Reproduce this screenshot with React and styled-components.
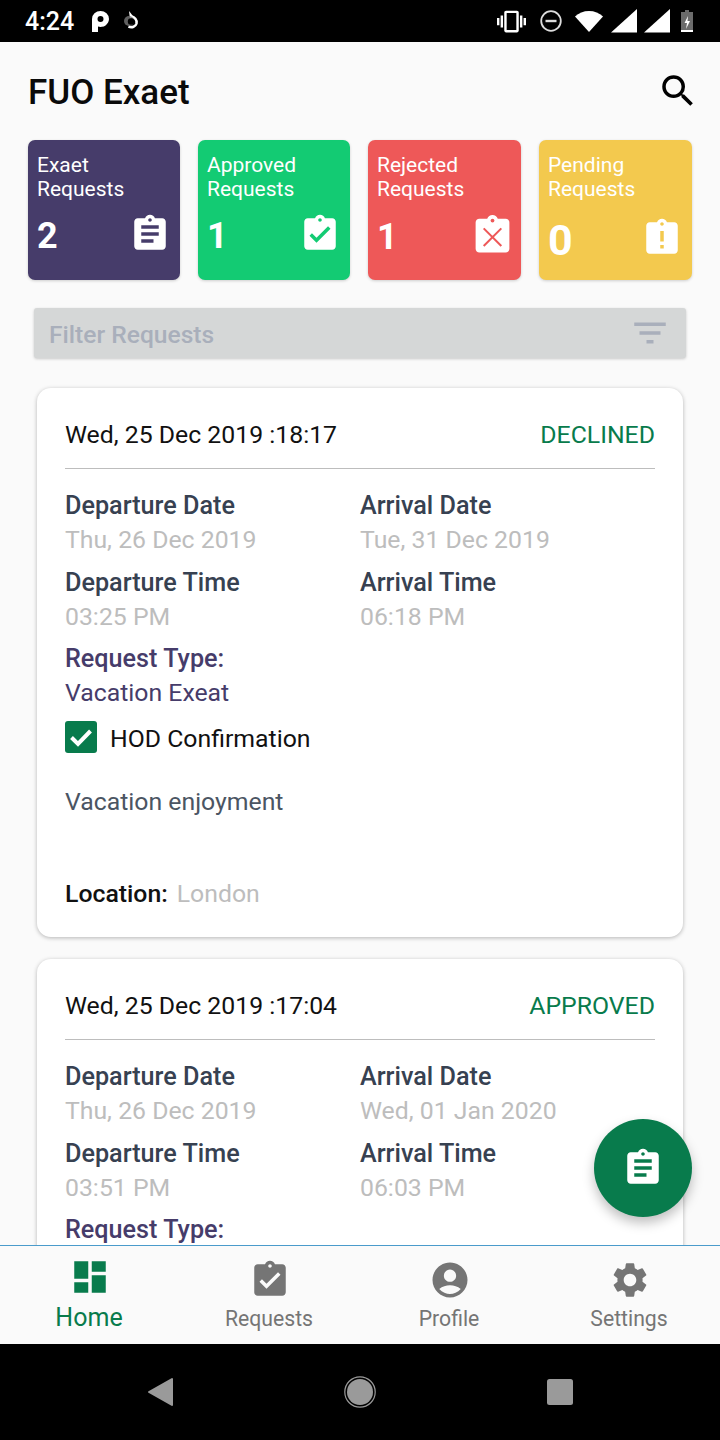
import styled, { createGlobalStyle } from "styled-components";
import {
  MdAccountCircle,
  MdAssignment,
  MdAssignmentLate,
  MdAssignmentTurnedIn,
  MdDashboard,
  MdFilterList,
  MdSearch,
  MdSettings,
  MdVibration,
} from "react-icons/md";

const GREEN = "#087b4c";
const PURPLE = "#463c6a";

const GlobalStyle = createGlobalStyle`
  html, body {
    margin: 0;
    padding: 0;
    background: #000;
  }
  * {
    box-sizing: border-box;
  }
`;

const Phone = styled.div`
  width: 720px;
  height: 1440px;
  display: flex;
  flex-direction: column;
  overflow: hidden;
  position: relative;
  background: #fafafa;
  font-family: Roboto, "Liberation Sans", sans-serif;
`;

const StatusBar = styled.div`
  height: 42px;
  flex-shrink: 0;
  display: flex;
  align-items: center;
  padding: 0 27px 0 25px;
  background: #000;
  color: #fff;
`;

const Time = styled.span`
  font-size: 25px;
  font-weight: 500;
  width: 67px;
`;

const StatusIcon = styled.svg`
  display: block;
  flex-shrink: 0;
  margin-left: ${(p) => p.$gap || 0}px;
`;

const Spacer = styled.div`
  flex: 1;
`;

const Vibrate = styled(MdVibration)`
  font-size: 29px;
  flex-shrink: 0;
`;

const Main = styled.div`
  flex: 1;
  min-height: 0;
  overflow: hidden;
`;

const Header = styled.div`
  height: 98px;
  display: flex;
  align-items: center;
  justify-content: space-between;
  padding: 0 21px 0 28px;
`;

const AppTitle = styled.h1`
  margin: 2px 0 0;
  font-size: 35px;
  font-weight: 500;
  color: #0a0a0a;
`;

const SearchIcon = styled(MdSearch)`
  font-size: 42px;
  color: #000;
`;

const Stats = styled.div`
  display: grid;
  grid-template-columns: 152px 152px 153px 153px;
  gap: 18px;
  margin: 0 28px;
`;

const StatCard = styled.div`
  height: 140px;
  padding: 13px 9px 0;
  border-radius: 7px;
  color: #fff;
  background: ${(p) => p.$color};
  box-shadow: 0 1px 3px rgba(0, 0, 0, 0.18);
`;

const StatLabel = styled.div`
  font-size: 21px;
  line-height: 24px;
`;

const StatRow = styled.div`
  height: 62px;
  display: flex;
  align-items: center;
  justify-content: space-between;
  margin-top: ${(p) => p.$drop || 2}px;
  font-size: ${(p) => p.$iconSize || 42}px;
  svg {
    flex-shrink: 0;
    margin-right: ${(p) => p.$iconInset || 0}px;
  }
`;

const StatNumber = styled.span`
  font-size: ${(p) => p.$size || 36}px;
  font-weight: 700;
  line-height: 1;
  padding-top: 4px;
`;

const FilterBar = styled.div`
  height: 50px;
  margin: 28px 34px 0;
  padding: 3px 15px 0 15px;
  display: flex;
  align-items: center;
  justify-content: space-between;
  border-radius: 3px;
  background: #d5d7d7;
  box-shadow: 0 1px 3px rgba(0, 0, 0, 0.2);
  color: #a9afbb;
  font-size: 24.6px;
  font-weight: 500;
`;

const FilterIcon = styled(MdFilterList)`
  font-size: 42px;
  color: #a9afbb;
  margin-top: -3px;
`;

const CardList = styled.div`
  display: flex;
  flex-direction: column;
  gap: 22px;
  margin: 30px 37px 0;
`;

const RequestCard = styled.div`
  height: 549px;
  flex-shrink: 0;
  padding: 28px;
  border-radius: 14px;
  background: #fff;
  box-shadow: 0 1px 4px rgba(0, 0, 0, 0.28);
`;

const CardHead = styled.div`
  height: 53px;
  display: flex;
  justify-content: space-between;
  padding-top: 1px;
  border-bottom: 1px solid #bdbdbd;
  font-size: 24.8px;
  line-height: 36px;
  color: #111;
`;

const Status = styled.span`
  color: ${GREEN};
`;

const Columns = styled.div`
  display: grid;
  grid-template-columns: 295px 1fr;
  margin-top: 21px;
`;

const Field = styled.div`
  height: 76.5px;
`;

const FieldLabel = styled.div`
  font-size: 25.2px;
  font-weight: 500;
  line-height: 31px;
  margin-bottom: 2px;
  color: ${(p) => p.$color || "#374151"};
`;

const FieldValue = styled.div`
  font-size: 24.8px;
  line-height: 34px;
  color: ${(p) => p.$color || "#bdbdbd"};
`;

const CheckRow = styled.div`
  display: flex;
  align-items: center;
  gap: 13px;
  height: 32px;
  margin-top: 1.5px;
  font-size: 24.8px;
  color: #111;
`;

const CheckBox = styled.span`
  width: 32px;
  height: 32px;
  display: flex;
  align-items: center;
  justify-content: center;
  border-radius: 3px;
  background: ${GREEN};
`;

const CheckLabel = styled.span`
  padding-top: 2px;
`;

const Reason = styled.div`
  margin-top: 32px;
  font-size: 24.8px;
  line-height: 34px;
  color: #4b5563;
`;

const LocationRow = styled.div`
  display: flex;
  gap: 9px;
  margin-top: 58px;
  font-size: 24.8px;
  line-height: 34px;
`;

const LocationLabel = styled.span`
  font-weight: 500;
  color: #111;
`;

const LocationValue = styled.span`
  color: #bdbdbd;
`;

const Fab = styled.div`
  position: absolute;
  left: 594px;
  top: 1119px;
  width: 98px;
  height: 98px;
  display: flex;
  align-items: center;
  justify-content: center;
  border-radius: 50%;
  background: ${GREEN};
  color: #fff;
  font-size: 42px;
  box-shadow: 0 6px 12px rgba(0, 0, 0, 0.25);
`;

const TabBar = styled.div`
  height: 99px;
  flex-shrink: 0;
  display: grid;
  grid-template-columns: repeat(4, 1fr);
  border-top: 1px solid #4a9bcb;
  background: #fafafa;
`;

const Tab = styled.div`
  display: flex;
  flex-direction: column;
  align-items: center;
  padding-top: ${(p) => (p.$active ? 10 : 13)}px;
  color: ${(p) => (p.$active ? GREEN : "#757575")};
  svg {
    font-size: 42px;
    display: block;
  }
`;

const TabLabel = styled.span`
  font-size: ${(p) => (p.$active ? 25 : 21.2)}px;
  line-height: 28px;
  margin: ${(p) => (p.$active ? 6 : 4)}px 2px 0 0;
`;

const SystemNav = styled.div`
  height: 96px;
  flex-shrink: 0;
  display: grid;
  grid-template-columns: repeat(3, 200px);
  justify-content: center;
  align-items: center;
  justify-items: center;
  background: #000;
`;

function RejectedIcon({ color }) {
  return (
    <svg width="1em" height="1em" viewBox="0 0 24 24">
      <path
        fill="#fff"
        d="M19 3h-4.18C14.4 1.84 13.3 1 12 1c-1.3 0-2.4.84-2.82 2H5c-1.1 0-2 .9-2 2v14c0 1.1.9 2 2 2h14c1.1 0 2-.9 2-2V5c0-1.1-.9-2-2-2z"
      />
      <circle cx="12" cy="4" r="1" fill={color} />
      <path
        stroke={color}
        strokeWidth="1.1"
        fill="none"
        d="M7.3 8.2l9.4 9.4M16.7 8.2l-9.4 9.4"
      />
    </svg>
  );
}

function Request({ time, status, arrival, depTime, arrTime }) {
  return (
    <RequestCard>
      <CardHead>
        <span>{time}</span>
        <Status>{status}</Status>
      </CardHead>
      <Columns>
        <Field>
          <FieldLabel>Departure Date</FieldLabel>
          <FieldValue>Thu, 26 Dec 2019</FieldValue>
        </Field>
        <Field>
          <FieldLabel>Arrival Date</FieldLabel>
          <FieldValue>{arrival}</FieldValue>
        </Field>
        <Field>
          <FieldLabel>Departure Time</FieldLabel>
          <FieldValue>{depTime}</FieldValue>
        </Field>
        <Field>
          <FieldLabel>Arrival Time</FieldLabel>
          <FieldValue>{arrTime}</FieldValue>
        </Field>
      </Columns>
      <Field>
        <FieldLabel $color={PURPLE}>Request Type:</FieldLabel>
        <FieldValue $color={PURPLE}>Vacation Exeat</FieldValue>
      </Field>
      <CheckRow>
        <CheckBox>
          <svg width="28" height="28" viewBox="0 0 28 28">
            <path fill="none" stroke="#fff" strokeWidth="4" d="M4.5 14.5l6.5 6.5L23.5 8" />
          </svg>
        </CheckBox>
        <CheckLabel>HOD Confirmation</CheckLabel>
      </CheckRow>
      <Reason>Vacation enjoyment</Reason>
      <LocationRow>
        <LocationLabel>Location:</LocationLabel>
        <LocationValue>London</LocationValue>
      </LocationRow>
    </RequestCard>
  );
}

export default function App() {
  return (
    <Phone>
      <GlobalStyle />
      <StatusBar>
        <Time>4:24</Time>
        <StatusIcon width="18" height="21" viewBox="0 0 18 21">
          <path
            fill="#fff"
            fillRule="evenodd"
            d="M0 8a8.5 8 0 0 1 17 0 8.5 8 0 0 1-11 7.6V21H0zM8.5 5a3 3 0 1 0 0 6 3 3 0 0 0 0-6z"
          />
        </StatusIcon>
        <StatusIcon $gap={13} width="17" height="20" viewBox="0 0 17 20">
          <path
            fill="none"
            stroke="#fff"
            strokeWidth="2.6"
            d="M8 5.5a5.8 5.8 0 0 1 5.5 7c-.8 3-4.5 4.5-8 3"
          />
          <path fill="#fff" d="M6 0l4 5-3 3z" />
          <circle cx="6" cy="10" r="5" fill="#777" opacity="0.8" />
          <circle cx="8" cy="10.5" r="3.2" fill="#000" />
        </StatusIcon>
        <Spacer />
        <Vibrate />
        <StatusIcon $gap={14} width="22" height="22" viewBox="0 0 22 22">
          <circle cx="11" cy="11" r="9.8" fill="none" stroke="#ddd" strokeWidth="1.8" />
          <rect x="5.5" y="9.8" width="11" height="2.4" fill="#ddd" />
        </StatusIcon>
        <StatusIcon $gap={13} width="28" height="22" viewBox="0 0 28 22">
          <path fill="#fff" d="M0 6.5C7-1 21-1 28 6.5L14 22z" />
        </StatusIcon>
        <StatusIcon $gap={8} width="26" height="24" viewBox="0 0 26 24">
          <path fill="#fff" d="M0 23.5L26 0v23.5z" />
        </StatusIcon>
        <StatusIcon $gap={7} width="26" height="24" viewBox="0 0 26 24">
          <path fill="#fff" d="M0 23.5L26 0v23.5z" />
        </StatusIcon>
        <StatusIcon $gap={11} width="12" height="24" viewBox="0 0 12 24">
          <path fill="#6b6b6b" d="M4 1h4v2h4v18H0V3h4z" />
          <rect y="21" width="12" height="2" fill="#fff" />
          <path fill="#fff" d="M7 7l-3.5 7H6l-1 6 4-8H6.5z" />
        </StatusIcon>
      </StatusBar>

      <Main>
        <Header>
          <AppTitle>FUO Exaet</AppTitle>
          <SearchIcon />
        </Header>

        <Stats>
          <StatCard $color={PURPLE}>
            <StatLabel>
              Exaet
              <br />
              Requests
            </StatLabel>
            <StatRow>
              <StatNumber>2</StatNumber>
              <MdAssignment />
            </StatRow>
          </StatCard>
          <StatCard $color="#13cb73">
            <StatLabel>
              Approved
              <br />
              Requests
            </StatLabel>
            <StatRow>
              <StatNumber>1</StatNumber>
              <MdAssignmentTurnedIn />
            </StatRow>
          </StatCard>
          <StatCard $color="#ee5858">
            <StatLabel>
              Rejected
              <br />
              Requests
            </StatLabel>
            <StatRow $drop={3} $iconSize={45} $iconInset={-3}>
              <StatNumber>1</StatNumber>
              <RejectedIcon color="#ee5858" />
            </StatRow>
          </StatCard>
          <StatCard $color="#f3c94e">
            <StatLabel>
              Pending
              <br />
              Requests
            </StatLabel>
            <StatRow $drop={6}>
              <StatNumber $size={43}>0</StatNumber>
              <MdAssignmentLate />
            </StatRow>
          </StatCard>
        </Stats>

        <FilterBar>
          Filter Requests
          <FilterIcon />
        </FilterBar>

        <CardList>
          <Request
            time="Wed, 25 Dec 2019 :18:17"
            status="DECLINED"
            arrival="Tue, 31 Dec 2019"
            depTime="03:25 PM"
            arrTime="06:18 PM"
          />
          <Request
            time="Wed, 25 Dec 2019 :17:04"
            status="APPROVED"
            arrival="Wed, 01 Jan 2020"
            depTime="03:51 PM"
            arrTime="06:03 PM"
          />
        </CardList>
      </Main>

      <Fab>
        <MdAssignment />
      </Fab>

      <TabBar>
        <Tab $active>
          <MdDashboard />
          <TabLabel $active>Home</TabLabel>
        </Tab>
        <Tab>
          <MdAssignmentTurnedIn />
          <TabLabel>Requests</TabLabel>
        </Tab>
        <Tab>
          <MdAccountCircle />
          <TabLabel>Profile</TabLabel>
        </Tab>
        <Tab>
          <MdSettings />
          <TabLabel>Settings</TabLabel>
        </Tab>
      </TabBar>

      <SystemNav>
        <svg width="26" height="30" viewBox="0 0 26 30">
          <path fill="#9a9a9a" stroke="#9a9a9a" strokeWidth="2" strokeLinejoin="round" d="M25 2v26L2 15z" />
        </svg>
        <svg width="32" height="32" viewBox="0 0 32 32">
          <circle cx="16" cy="16" r="15.2" fill="none" stroke="#9a9a9a" strokeWidth="1.2" />
          <circle cx="16" cy="16" r="13" fill="#9a9a9a" />
        </svg>
        <svg width="28" height="28" viewBox="0 0 28 28">
          <rect x="1" y="1" width="26" height="26" rx="2.5" fill="#9a9a9a" />
        </svg>
      </SystemNav>
    </Phone>
  );
}
